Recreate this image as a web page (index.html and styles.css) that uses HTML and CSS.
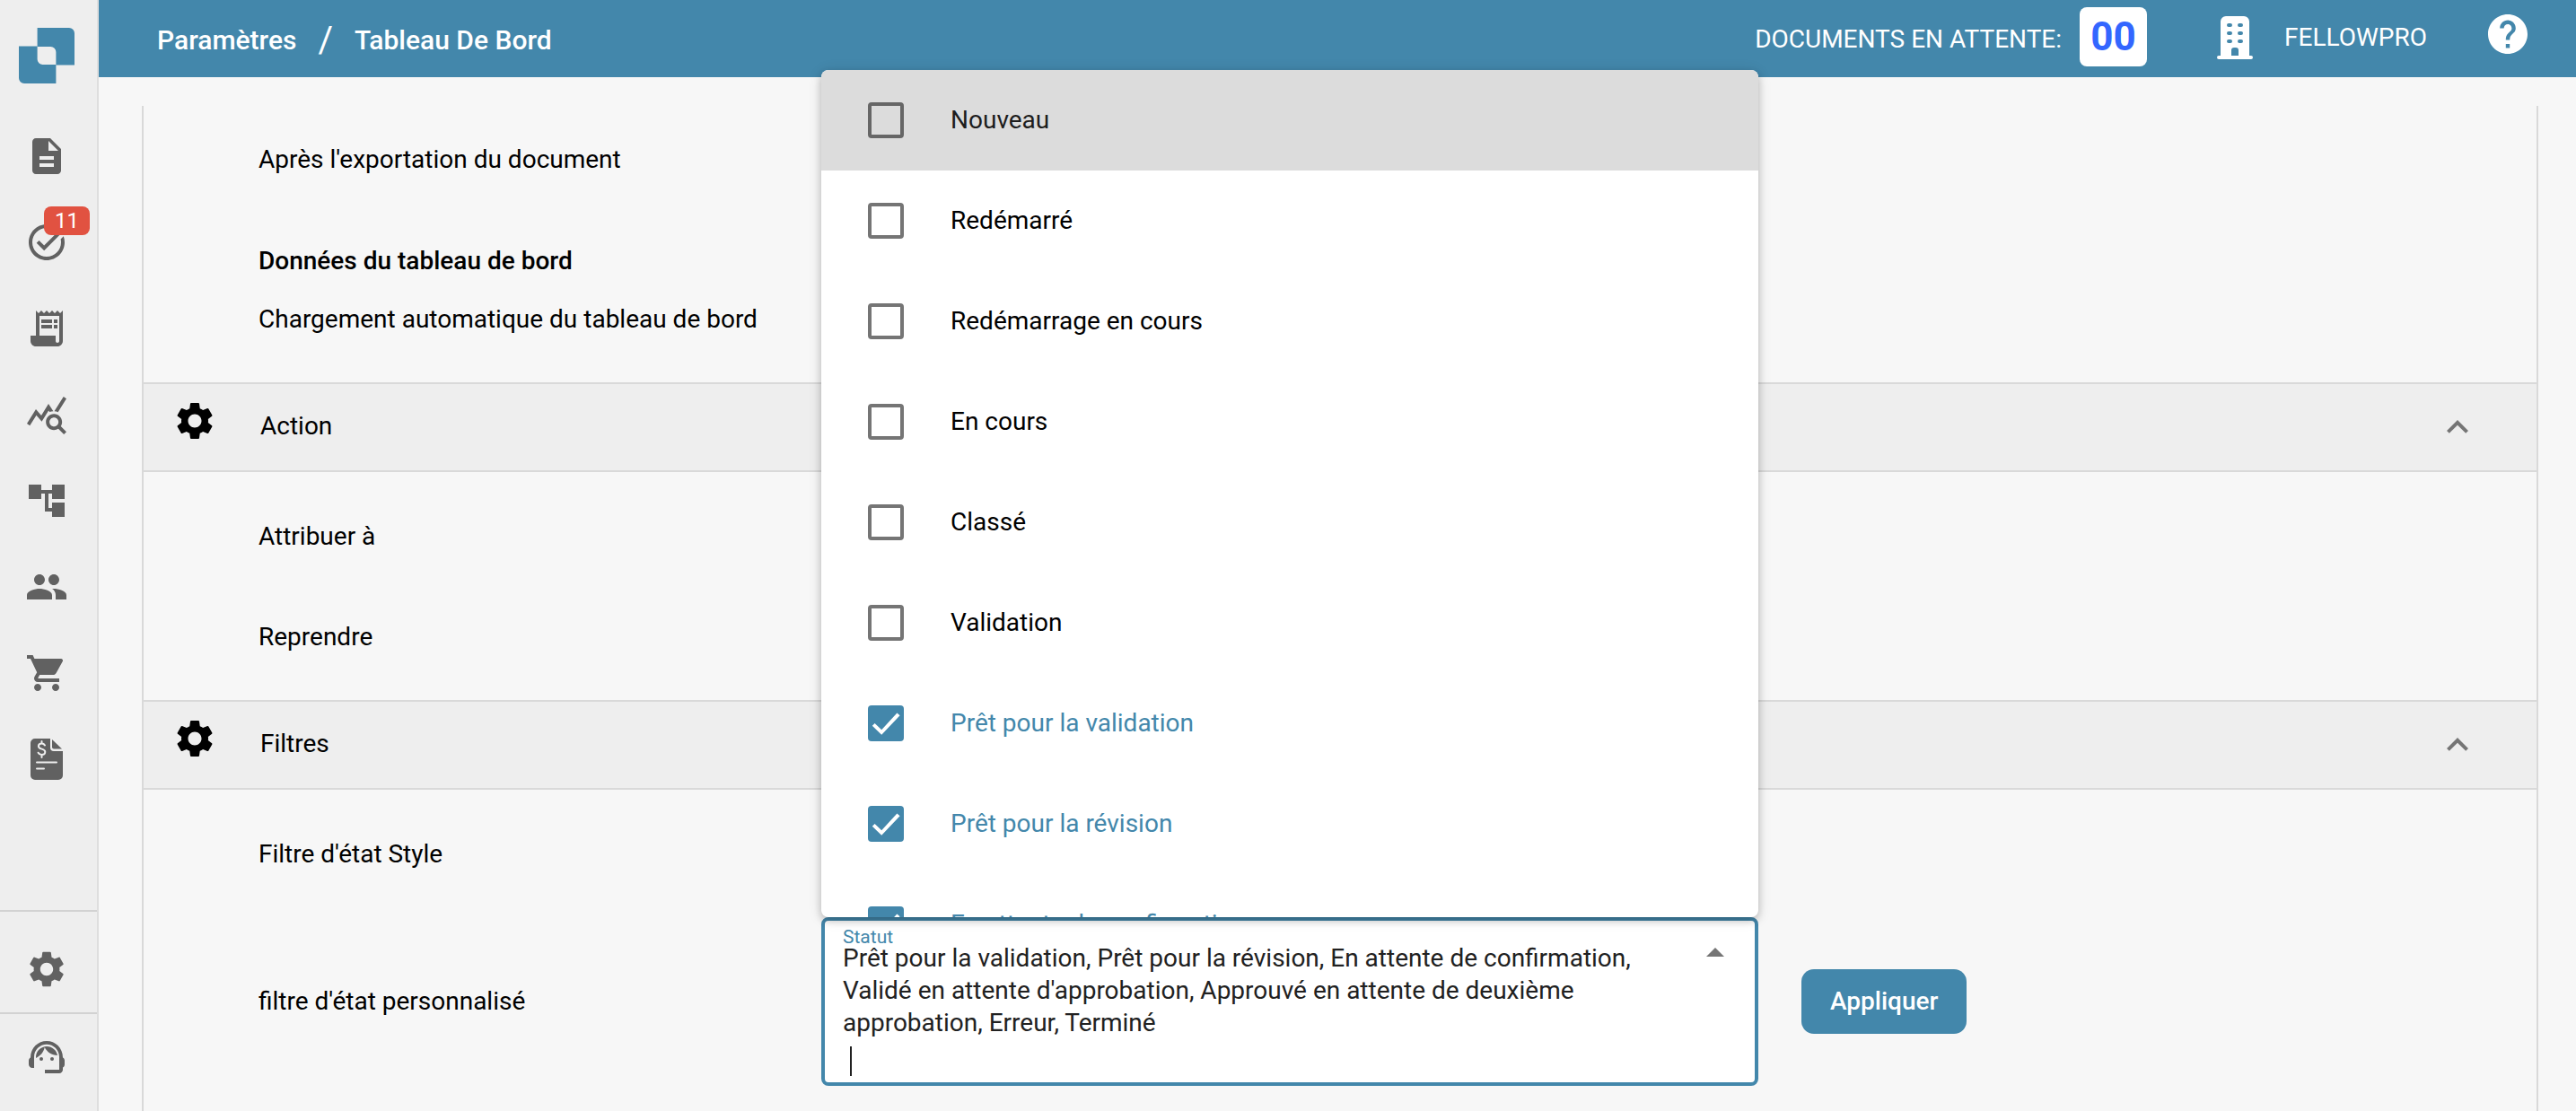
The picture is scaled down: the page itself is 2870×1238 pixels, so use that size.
FILE: index.html
```html
<!DOCTYPE html>
<html lang="fr">
<head>
<meta charset="utf-8">
<title>Paramètres – Tableau De Bord</title>
<meta name="viewport" content="width=device-width, initial-scale=1">
<link rel="stylesheet" href="styles.css">
</head>
<body>
<svg class="sprite" aria-hidden="true">
  <symbol id="gear" viewBox="0 0 24 24"><path d="M19.14 12.94c.04-.3.06-.61.06-.94 0-.32-.02-.64-.07-.94l2.03-1.58c.18-.14.23-.41.12-.61l-1.92-3.32c-.12-.22-.37-.29-.59-.22l-2.39.96c-.5-.38-1.03-.7-1.62-.94l-.36-2.54c-.04-.24-.24-.41-.48-.41h-3.84c-.24 0-.43.17-.47.41l-.36 2.54c-.59.24-1.13.57-1.62.94l-2.39-.96c-.22-.08-.47 0-.59.22L2.74 8.87c-.12.21-.08.47.12.61l2.03 1.58c-.05.3-.09.63-.09.94s.02.64.07.94l-2.03 1.58c-.18.14-.23.41-.12.61l1.92 3.32c.12.22.37.29.59.22l2.39-.96c.5.38 1.03.7 1.62.94l.36 2.54c.05.24.24.41.48.41h3.84c.24 0 .44-.17.47-.41l.36-2.54c.59-.24 1.13-.56 1.62-.94l2.39.96c.22.08.47 0 .59-.22l1.92-3.32c.12-.22.07-.47-.12-.61l-2.01-1.58zM12 15.6c-1.98 0-3.6-1.62-3.6-3.6s1.62-3.6 3.6-3.6 3.6 1.62 3.6 3.6-1.62 3.6-3.6 3.6z"/></symbol>
  <symbol id="chevron-up" viewBox="0 0 24 24"><path d="M12 8l-6 6 1.41 1.41L12 10.83l4.59 4.58L18 14z"/></symbol>
</svg>
<div class="app">
  <nav class="sidebar" aria-label="Navigation principale">
    <a class="logo" href="#" aria-label="Accueil">
      <svg viewBox="0 0 62 62" width="62" height="62"><path d="M20.600 0H56a6 6 0 0 1 6 6v35.400H41.400V27a6 6 0 0 0-6-6H20.600z"/><path d="M0 20.600h20.600V35a6 6 0 0 0 6 6h14.800v21H6a6 6 0 0 1-6-6z"/></svg>
    </a>
    <div class="nav-list">
      <a class="nav-item" href="#" aria-label="Documents"><svg class="icon" viewBox="0 0 24 24"><path d="M14 2H6c-1.1 0-1.99.9-1.99 2L4 20c0 1.100.89 2 1.990 2H18c1.100 0 2-.9 2-2V8l-6-6zm2 16H8v-2h8v2zm0-4H8v-2h8v2zm-3-5V3.500L18.500 9H13z"/></svg></a>
      <a class="nav-item" href="#" aria-label="Tâches"><svg class="icon" viewBox="0 0 24 24"><path d="M22 5.180 10.590 16.600l-4.240-4.240 1.410-1.410 2.830 2.830 10-10L22 5.180zM12 20c-4.410 0-8-3.590-8-8s3.590-8 8-8c1.570 0 3.040.46 4.280 1.250l1.450-1.450C16.100 2.670 14.130 2 12 2 6.480 2 2 6.480 2 12s4.480 10 10 10 10-4.480 10-10c0-1.190-.22-2.330-.6-3.390l-1.600 1.600c.13.58.2 1.180.2 1.790 0 4.410-3.590 8-8 8z"/></svg><span class="badge">11</span></a>
      <a class="nav-item" href="#" aria-label="Reçus"><svg class="icon" viewBox="0 0 24 24"><path d="M19.500 3.500 18 2l-1.500 1.500L15 2l-1.500 1.500L12 2l-1.500 1.500L9 2 7.500 3.500 6 2v14H3v3c0 1.660 1.340 3 3 3h12c1.660 0 3-1.340 3-3V2l-1.500 1.500zM19 19c0 .55-.45 1-1 1s-1-.45-1-1v-3H8V5h11v14z"/><path d="M9 7h6v2H9zM16 7h2v2h-2zM9 10h6v2H9zM16 10h2v2h-2z"/></svg></a>
      <a class="nav-item" href="#" aria-label="Statistiques"><svg class="icon" viewBox="0 0 24 24"><path d="M19.880 18.470c.44-.7.7-1.510.7-2.390 0-2.490-2.010-4.500-4.500-4.500s-4.500 2.010-4.500 4.500 2.010 4.500 4.490 4.500c.88 0 1.700-.26 2.390-.7L21.580 23 23 21.580l-3.120-3.110zm-3.800.110c-1.380 0-2.500-1.120-2.500-2.500s1.120-2.500 2.500-2.500 2.500 1.120 2.500 2.500-1.120 2.500-2.500 2.500zM15.720 10.080c-.74.02-1.450.18-2.100.45l-.55-.83-3.800 6.180-3.010-3.520-3.630 5.810L1 17l5-8 3 3.500L13 6l2.720 4.080zm2.590.5c-.64-.28-1.330-.45-2.050-.49L21.380 2 23 3.180l-4.690 7.400z"/></svg></a>
      <a class="nav-item" href="#" aria-label="Flux"><svg class="icon" viewBox="0 0 24 24"><path d="M22 11V3h-7v3H9V3H2v8h7V8h2v10h4v3h7v-8h-7v3h-2V8h2v3z"/></svg></a>
      <a class="nav-item" href="#" aria-label="Utilisateurs"><svg class="icon" viewBox="0 0 24 24"><path d="M16 11c1.660 0 2.990-1.340 2.990-3S17.660 5 16 5c-1.660 0-3 1.340-3 3s1.340 3 3 3zm-8 0c1.660 0 2.990-1.340 2.990-3S9.660 5 8 5C6.340 5 5 6.340 5 8s1.340 3 3 3zm0 2c-2.330 0-7 1.170-7 3.500V19h14v-2.500c0-2.330-4.670-3.500-7-3.500zm8 0c-.29 0-.62.02-.97.05 1.160.84 1.970 1.970 1.970 3.450V19h6v-2.500c0-2.330-4.670-3.500-7-3.500z"/></svg></a>
      <a class="nav-item" href="#" aria-label="Achats"><svg class="icon" viewBox="0 0 24 24"><path d="M7 18c-1.100 0-1.990.9-1.990 2S5.900 22 7 22s2-.9 2-2-.9-2-2-2zM1 2v2h2l3.600 7.590-1.350 2.450c-.16.28-.25.61-.25.96 0 1.100.9 2 2 2h12v-2H7.420c-.14 0-.25-.11-.25-.25l.03-.12.9-1.630h7.450c.75 0 1.410-.41 1.750-1.030l3.580-6.490A1.003 1.003 0 0 0 20 4H5.210l-.94-2H1zm16 16c-1.100 0-1.990.9-1.990 2s.89 2 1.990 2 2-.9 2-2-.9-2-2-2z"/></svg></a>
      <a class="nav-item" href="#" aria-label="Factures"><svg class="icon" viewBox="0 0 48 48"><path d="M10 1h18v10a4 4 0 0 0 4 4h10v27a5 5 0 0 1-5 5H11a5 5 0 0 1-5-5V6a5 5 0 0 1 5-5z"/><path d="M30 2l11 10.500h-9a2 2 0 0 1-2-2z"/><path class="cut" d="M22 8.500c-1-1.700-2.300-2-3.500-2-2 0-3.600 1.200-3.600 3 0 4.300 7.400 2 7.400 6.300 0 1.900-1.700 3.200-3.800 3.200-1.600 0-3-.7-3.900-2.300M18.500 4v2.500M18.500 19v3M13 27.500h22M13 34.500h8"/></svg></a>
    </div>
    <div class="nav-foot">
      <a class="nav-item" href="#" aria-label="Paramètres"><svg class="icon"><use href="#gear"/></svg></a>
      <a class="nav-item" href="#" aria-label="Assistance"><svg class="icon" viewBox="0 0 24 24"><path d="M21 12.220C21 6.730 16.740 3 12 3c-4.690 0-9 3.650-9 9.280-.6.34-1 .98-1 1.720v2c0 1.100.9 2 2 2h1v-6.100c0-3.870 3.130-7 7-7s7 3.130 7 7V19h-8v2h8c1.100 0 2-.9 2-2v-1.220c.59-.31 1-.92 1-1.640v-2.300c0-.7-.41-1.310-1-1.620z"/><circle cx="9" cy="13" r="1"/><circle cx="15" cy="13" r="1"/><path d="M18 11.030C17.520 8.180 15.040 6 12.050 6c-3.030 0-6.290 2.510-6.030 6.450 2.470-1.010 4.330-3.210 4.860-5.890 1.310 2.630 4 4.440 7.120 4.470z"/></svg></a>
    </div>
  </nav>
  <div class="page">
    <header class="topbar">
      <nav class="crumbs" aria-label="Fil d'Ariane"><a href="#">Paramètres</a><span class="slash">/</span><a href="#">Tableau De Bord</a></nav>
      <div class="pending"><span class="pending-label">DOCUMENTS EN ATTENTE:</span><strong class="count">00</strong></div>
      <div class="account">
        <svg class="building" viewBox="0 0 40 48" width="40" height="48"><path fill-rule="evenodd" d="M10 0h20a6 6 0 0 1 6 6v38h2a2 2 0 0 1 0 4H2a2 2 0 0 1 0-4h2V6a6 6 0 0 1 6-6zM13 8a2 2 0 0 0 0 4h2a2 2 0 0 0 0-4zm12 0a2 2 0 0 0 0 4h2a2 2 0 0 0 0-4zM13 17a2 2 0 0 0 0 4h2a2 2 0 0 0 0-4zm12 0a2 2 0 0 0 0 4h2a2 2 0 0 0 0-4zM13 26a2 2 0 0 0 0 4h2a2 2 0 0 0 0-4zm12 0a2 2 0 0 0 0 4h2a2 2 0 0 0 0-4zM19 35a3 3 0 0 0-3 3v6h8v-6a3 3 0 0 0-3-3z"/></svg>
        <span>FELLOWPRO</span>
      </div>
      <button class="help" type="button" aria-label="Aide"><svg viewBox="2 2 20 20" width="44" height="44"><path d="M12 2C6.480 2 2 6.480 2 12s4.480 10 10 10 10-4.480 10-10S17.520 2 12 2zm1 17h-2v-2h2v2zm2.070-7.750l-.9.920C13.450 12.900 13 13.500 13 15h-2v-.5c0-1.100.45-2.100 1.170-2.830l1.240-1.260c.37-.36.59-.86.59-1.410 0-1.100-.9-2-2-2s-2 .9-2 2H8c0-2.210 1.790-4 4-4s4 1.790 4 4c0 .88-.36 1.680-.93 2.250z"/></svg></button>
    </header>
    <main class="content">
      <div class="panel">
        <section class="body body-first">
          <div class="row"><span class="label">Après l'exportation du document</span></div>
          <h3 class="subhead">Données du tableau de bord</h3>
          <div class="row row-short"><span class="label">Chargement automatique du tableau de bord</span></div>
        </section>
        <section>
          <h2 class="head"><svg class="head-icon"><use href="#gear"/></svg><span class="head-title">Action</span><button class="toggle" type="button" aria-label="Replier Action"><svg><use href="#chevron-up"/></svg></button></h2>
          <div class="body">
            <div class="row"><span class="label">Attribuer à</span></div>
            <div class="row"><span class="label">Reprendre</span></div>
          </div>
        </section>
        <section>
          <h2 class="head"><svg class="head-icon"><use href="#gear"/></svg><span class="head-title">Filtres</span><button class="toggle" type="button" aria-label="Replier Filtres"><svg><use href="#chevron-up"/></svg></button></h2>
          <div class="body">
            <div class="row"><span class="label">Filtre d'état Style</span></div>
            <div class="row row-field">
              <label class="label" for="state-filter">filtre d'état personnalisé</label>
              <div class="select">
                <div class="select-main">
                  <span class="select-label">Statut</span>
                  <span class="select-value">Prêt pour la validation, Prêt pour la révision, En attente de confirmation, Validé en attente d'approbation, Approuvé en attente de deuxième approbation, Erreur, Terminé</span>
                  <span class="entry"><input id="state-filter" type="text" role="combobox" aria-expanded="true" aria-controls="state-options"></span>
                </div>
                <span class="arrow"></span>
                <div class="menu" id="state-options">
                  <label class="option active"><input type="checkbox"><span>Nouveau</span></label>
                  <label class="option"><input type="checkbox"><span>Redémarré</span></label>
                  <label class="option"><input type="checkbox"><span>Redémarrage en cours</span></label>
                  <label class="option"><input type="checkbox"><span>En cours</span></label>
                  <label class="option"><input type="checkbox"><span>Classé</span></label>
                  <label class="option"><input type="checkbox"><span>Validation</span></label>
                  <label class="option"><input type="checkbox" checked><span>Prêt pour la validation</span></label>
                  <label class="option"><input type="checkbox" checked><span>Prêt pour la révision</span></label>
                  <label class="option"><input type="checkbox" checked><span>En attente de confirmation</span></label>
                </div>
              </div>
              <button class="apply" type="button">Appliquer</button>
            </div>
          </div>
        </section>
      </div>
    </main>
  </div>
</div>
</body>
</html>
```
FILE: styles.css
```css
:root {
  --blue: #4387ab;
  --grey: #eeeeee;
  --line: #d9d9d9;
  --icon: #616161;
}

* { box-sizing: border-box; }

body {
  margin: 0;
  background: #f7f7f7;
  color: #000;
  font: 28px/36px Roboto, "Liberation Sans", sans-serif;
}

a { color: inherit; text-decoration: none; }
button { font: inherit; border: 0; padding: 0; background: none; cursor: pointer; }
svg { display: block; fill: currentColor; }
.sprite { position: absolute; width: 0; height: 0; }

.app { display: flex; height: 100vh; overflow: hidden; }

/* Sidebar */
.sidebar {
  display: flex;
  flex-direction: column;
  flex: none;
  width: 110px;
  background: var(--grey);
  border-right: 2px solid #dedede;
  color: var(--icon);
}
.logo { padding: 31px 0 33px 21px; color: var(--blue); }
.nav-list { flex: 1; }
.nav-item {
  position: relative;
  display: flex;
  align-items: center;
  height: 96px;
  padding-left: 28px;
}
.icon { width: 48px; height: 48px; }
.cut { fill: none; stroke: var(--grey); stroke-width: 2; stroke-linecap: round; }
.badge {
  position: absolute;
  left: 49px;
  top: 8px;
  width: 51px;
  border-radius: 8px;
  background: #e15241;
  color: #fff;
  font-size: 24px;
  line-height: 32px;
  text-align: center;
}
.nav-foot .nav-item { height: 114px; border-top: 2px solid #d2d2d2; padding-top: 16px; }
.nav-foot .nav-item + .nav-item { height: 110px; padding: 0 0 12px 28px; }

/* Top bar */
.page { flex: 1; min-width: 0; display: flex; flex-direction: column; }
.topbar {
  display: flex;
  align-items: center;
  flex: none;
  height: 86px;
  padding: 0 54px 0 65px;
  background: var(--blue);
  color: #fff;
}
.crumbs { display: flex; align-items: center; margin-right: auto; padding-top: 4px; font-size: 30px; font-weight: 500; }
.slash { padding: 0 24px; font-size: 40px; font-weight: 400; }
.pending { display: flex; align-items: center; gap: 20px; }
.pending-label { padding-top: 2px; }
.count {
  width: 75px;
  margin-bottom: 4px;
  border-radius: 8px;
  background: #fff;
  color: #3366ff;
  font-size: 44px;
  line-height: 66px;
  text-align: center;
}
.account { display: flex; align-items: center; gap: 35px; margin-left: 78px; padding-bottom: 2px; }
.help { margin: 0 0 10px 68px; color: #fff; }

/* Settings panel */
.content { flex: 1; min-height: 0; padding: 32px 42px 0 48px; }
.panel { min-height: 100%; border: solid var(--line); border-width: 0 2px; }
.head {
  display: flex;
  align-items: center;
  height: 100px;
  margin: 0;
  padding: 0 64px 0 32px;
  background: var(--grey);
  border: solid var(--line);
  border-width: 2px 0;
  font-size: 28px;
  font-weight: 400;
}
.head-icon { width: 50px; height: 50px; margin: 0 48px 14px 0; }
.head-title { padding-bottom: 2px; }
.toggle { margin-left: auto; color: #757575; }
.toggle svg { width: 48px; height: 48px; }
.body { padding: 16px 0 14px 128px; }
.body-first { padding-top: 4px; padding-bottom: 22px; }
.row {
  display: grid;
  grid-template-columns: 627fr 1044fr 867fr;
  align-items: center;
  min-height: 112px;
}
.row-short { min-height: 96px; }
.row-field { margin-top: 14px; }
.subhead { margin: 40px 0 0; font-size: 28px; line-height: 34px; font-weight: 500; }
.apply {
  justify-self: start;
  height: 72px;
  margin-left: 48px;
  padding: 0 32px;
  border-radius: 14px;
  background: var(--blue);
  color: #fff;
  font-weight: 500;
}

/* Multi-select */
.select {
  position: relative;
  display: flex;
  min-height: 188px;
  padding: 6px 34px 0 20px;
  border: 4px solid var(--blue);
  border-radius: 8px;
  background: #fff;
  color: #212121;
}
.select-main { flex: 1; display: flex; flex-direction: column; }
.select-label { height: 18px; color: var(--blue); font-size: 21px; line-height: 24px; }
.select-value { max-width: 920px; }
.entry { display: flex; margin: 8px 0 0 8px; border-left: 2px solid #212121; }
.entry input { width: 100%; height: 33px; padding: 0; border: 0; outline: 0; background: none; font: inherit; }
.arrow {
  width: 20px;
  height: 10px;
  margin-top: 24px;
  background: #757575;
  clip-path: polygon(50% 0, 100% 100%, 0 100%);
}
.menu {
  position: absolute;
  left: -4px;
  right: -4px;
  bottom: calc(100% + 4px);
  max-height: 944px;
  overflow: hidden;
  border-radius: 8px;
  background: #fff;
  box-shadow: 0 4px 8px rgba(0, 0, 0, .2), 0 2px 16px rgba(0, 0, 0, .12);
  color: #000;
}
.option { display: flex; align-items: center; gap: 52px; height: 112px; padding: 0 52px; }
.option.active { background: #dcdcdc; color: #1d1d1d; }
.option input {
  appearance: none;
  flex: none;
  display: grid;
  width: 40px;
  height: 40px;
  margin: 0;
  border: 4px solid #757575;
  border-radius: 4px;
}
.option.active input { border-color: #666; }
.option input:checked { border: 0; background: var(--blue); }
.option input:checked::before {
  content: "";
  background: #fff;
  clip-path: polygon(12% 57%, 19% 50%, 38% 68%, 81% 21%, 89% 28%, 38% 82%);
}
.option:has(:checked) { color: var(--blue); }
```
